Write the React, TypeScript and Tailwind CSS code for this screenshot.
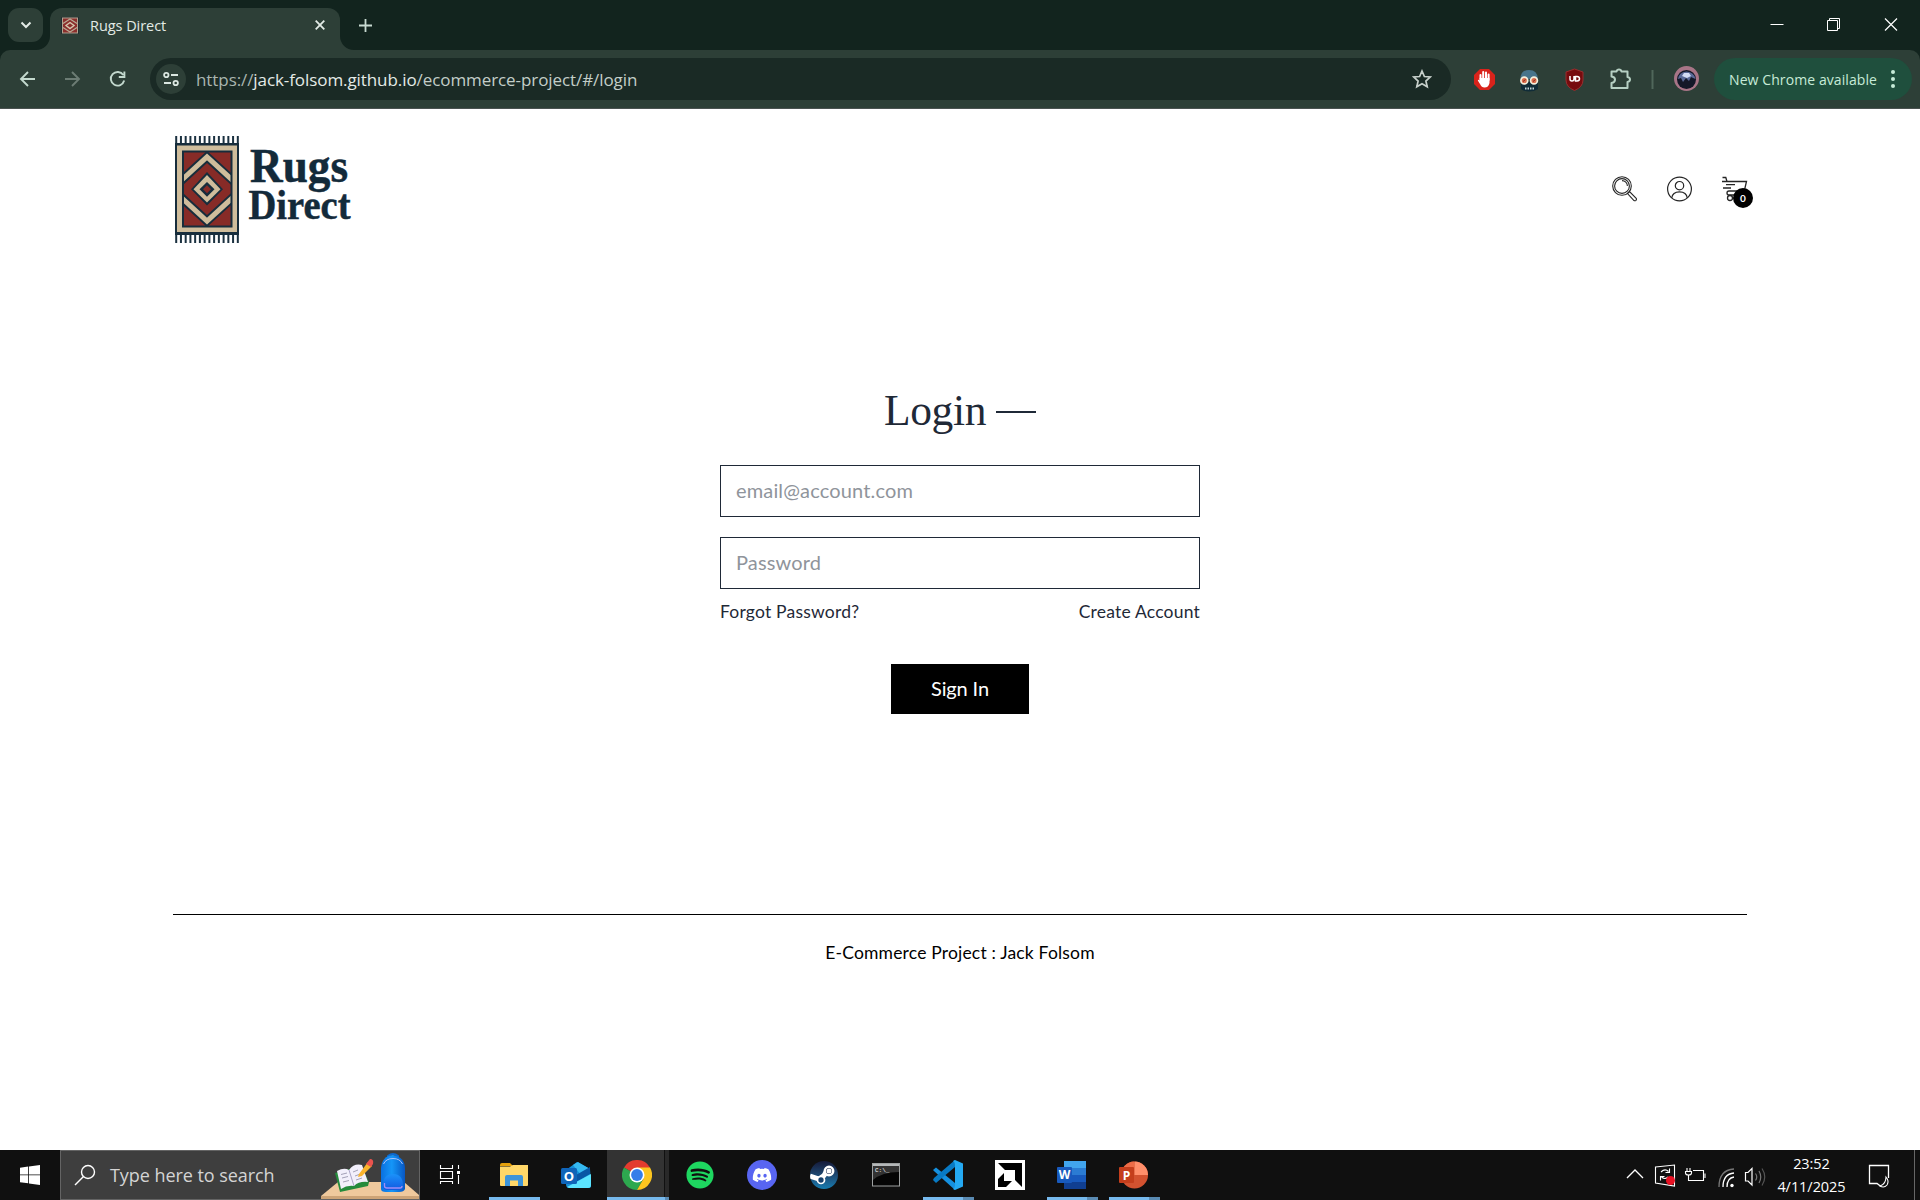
import React from "react";
import { FaSpotify, FaDiscord } from "react-icons/fa6";

const UI = "font-['Open_Sans','Noto_Sans',sans-serif]";

function RugArt() {
  const fringe = Array.from({ length: 14 }, (_, i) => 1.2 + i * 4.74);
  return (
    <svg width="64" height="107" viewBox="0 0 64 107" className="shrink-0">
      {fringe.map((x) => (
        <path key={x} d={`M${x} 0V8M${x} 98V107`} stroke="#1b3140" strokeWidth="2" />
      ))}
      <rect x="0" y="7" width="64" height="92" fill="#172d3c" />
      <rect x="2" y="9.5" width="60" height="86.5" fill="#cfbd9c" />
      <rect x="9" y="16" width="47" height="74" fill="#872b27" />
      <svg x="8" y="15" width="49" height="76" viewBox="8 15 49 76">
        <path d="M2 48.3L32 21L62 48.300M2 57.700L32 85L62 57.700" fill="none" stroke="#172d3c" strokeWidth="9" />
        <path d="M2 48.300L32 21L62 48.300M2 57.700L32 85L62 57.700" fill="none" stroke="#cfbd9c" strokeWidth="5" />
        <path d="M32 36L48 53.300L32 69.500L16 53.300Z" fill="#172d3c" />
        <path d="M32 39L45.500 53.300L32 66.500L18.500 53.300Z" fill="#cfbd9c" />
        <path d="M32 46L39.500 53.300L32 60.700L24.500 53.300Z" fill="#172d3c" />
        <path d="M32 49.300L36 53.300L32 57.300L28 53.300Z" fill="#872b27" />
      </svg>
      <rect x="8" y="15.500" width="48.500" height="75" fill="none" stroke="#172d3c" strokeWidth="2" />
    </svg>
  );
}

function Titlebar() {
  return (
    <div className="flex h-[50px] shrink-0 bg-[#12241e]">
      <div className="mt-2 ml-2 flex h-[34px] w-[35px] items-center justify-center rounded-[11px] bg-[#2d3f37]">
        <svg width="12" height="12" viewBox="0 0 12 12" fill="none" stroke="#e3ebe6" strokeWidth="2">
          <path d="M1.500 3.500L6 8L10.500 3.500" />
        </svg>
      </div>
      <div className="relative mt-2 ml-[7px] flex h-[42px] w-[290px] items-center rounded-t-[12px] bg-[#2d3f37] pb-[8px]">
        <svg width="14" height="14" className="absolute bottom-0 -left-[14px]"><path d="M14 0V14H0A14 14 0 0 0 14 0" fill="#2d3f37" /></svg>
        <svg width="14" height="14" className="absolute -right-[14px] bottom-0"><path d="M0 0V14H14A14 14 0 0 1 0 0" fill="#2d3f37" /></svg>
        <svg width="18" height="17" viewBox="0 0 18 17" className="ml-[11px]">
          <rect width="18" height="17" fill="#222c31" />
          <rect x="1.500" y="1" width="15" height="15" fill="#8c2f2d" stroke="#b2a48f" />
          <path d="M2 6.500L9 2L16 6.500M2 10.500L9 15L16 10.500" fill="none" stroke="#b9ac96" strokeWidth="1.200" />
          <path d="M9 5.500L13 8.500L9 11.500L5 8.500Z" fill="#8c2f2d" stroke="#d5c8ae" strokeWidth="1.400" />
        </svg>
        <span className={`${UI} mt-[2px] ml-[11px] text-[14.500px] tracking-[-0.050px] text-[#e3ebe6]`}>Rugs Direct</span>
        <svg width="10" height="10" viewBox="0 0 10 10" stroke="#e3ebe6" strokeWidth="1.800" className="mr-[15px] ml-auto">
          <path d="M.7.7L9.300 9.300M9.300.7L.7 9.300" />
        </svg>
      </div>
      <svg width="13" height="13" viewBox="0 0 13 13" stroke="#c8dad1" strokeWidth="1.800" className="mt-[19px] ml-[19px]">
        <path d="M6.500 0V13M0 6.500H13" />
      </svg>
      <div className="ml-auto flex h-[50px] items-center text-white">
        <svg width="57" height="50" stroke="currentColor"><path d="M21.500 24.500H34.500" /></svg>
        <svg width="57" height="50" fill="none" stroke="currentColor"><path d="M21.500 20.500H31.500V30.500H21.500ZM23.500 20.500V18.500H33.500V28.500H31.500" /></svg>
        <svg width="57" height="50" fill="none" stroke="currentColor" strokeWidth="1.200"><path d="M22 18.500L34 30.500M34 18.500L22 30.500" /></svg>
      </div>
    </div>
  );
}

function Toolbar() {
  return (
    <div className="flex h-[59px] shrink-0 bg-[#12241e]">
      <div className="flex h-[59px] w-full items-center rounded-t-[10px] border-b border-[#4a5250] bg-[#2d3f37]">
        <svg width="150" height="58" viewBox="0 50 150 58" fill="none" strokeWidth="1.900" className="shrink-0">
          <path d="M35 79H21M28 72L21 79L28 86" stroke="#c3d9ce" />
          <path d="M65 79H79M72 72L79 79L72 86" stroke="#6c7c74" />
          <path d="M123.300 75A6.800 6.800 0 1 0 124.200 80.500M124.400 71.500V77H118.800" stroke="#c3d9ce" />
        </svg>
        <div className="flex h-[42px] w-[1301px] items-center rounded-full bg-[#1a2a25]">
          <div className="ml-[6px] flex h-[30px] w-[30px] items-center justify-center rounded-full bg-[#2d3f37]">
            <svg width="16" height="16" viewBox="0 0 16 16" fill="none" stroke="#dbe7e1" strokeWidth="1.800">
              <circle cx="3.300" cy="4" r="2.200" /><path d="M8 4H15M1 12H8" /><circle cx="12.700" cy="12" r="2.200" />
            </svg>
          </div>
          <div className={`${UI} mt-[1px] ml-[10px] text-[17px] tracking-[-0.080px] whitespace-nowrap text-[#a9b5af]`}>
            https://<span className="text-[#e4ebe7]">jack-folsom.github.io</span><span className="text-[#c3cec8]">/ecommerce-project/#/login</span>
          </div>
          <svg width="20" height="20" viewBox="0 0 20 20" fill="none" stroke="#c7d0cb" strokeWidth="1.700" className="mr-[19px] ml-auto">
            <path d="M10 2L12.400 7.500L18.300 8L13.900 12L15.200 17.700L10 14.700L4.800 17.700L6.100 12L1.700 8L7.600 7.500Z" />
          </svg>
        </div>
        <svg width="263" height="58" viewBox="1451 50 263 58" className="shrink-0">
          <path d="M1480 69H1489L1495 75V84L1489 90H1480L1474 84V75Z" fill="#d9231b" />
          <path d="M1480.500 80.500V75M1483.200 79V72M1486 79V72.500M1488.600 80V74.500" stroke="#fff" strokeWidth="2" strokeLinecap="round" />
          <path d="M1479.500 78H1489.500V83Q1488.500 87.500 1484.500 87.500Q1481.500 87.500 1480 84L1477.800 80.500Q1478.500 79 1480 81Z" fill="#fff" />
          <path d="M1520.500 79Q1520.500 70 1529 70Q1537.500 70 1538 79Z" fill="#47748b" />
          <path d="M1521 82H1538V89Q1534 91.500 1529 91.500Q1524 91.500 1521 89Z" fill="#102c38" />
          <path d="M1525 88.500H1534" stroke="#c0d3d5" strokeWidth="2" strokeDasharray="1.500 1" />
          <circle cx="1524.300" cy="80.500" r="3.400" fill="#dd6d4c" stroke="#f3eeda" strokeWidth="1.700" />
          <circle cx="1534" cy="80.500" r="3.400" fill="#dd6d4c" stroke="#f3eeda" strokeWidth="1.700" />
          <path d="M1523 81.500L1525.500 79.500M1533 81.500L1535.500 79.500" stroke="#7c2c20" />
          <path d="M1574.500 69L1583 72V80Q1583 87 1574.500 90.500Q1566 87 1566 80V72Z" fill="#760b0e" stroke="#992e2e" />
          <path d="M1570 76V79Q1570 81 1572 81Q1574 81 1574 79V76M1575.500 81V76.500H1577Q1579.500 76.500 1579.500 78.800Q1579.500 81 1577 81Z" fill="none" stroke="#fff" strokeWidth="1.500" />
          <path d="M1611.500 71.500H1616.500Q1617 69.500 1619 69.500Q1621 69.500 1621.500 71.500H1627.500V77Q1630 77.500 1630 79.500Q1630 81.500 1627.500 82V88H1611.500V83Q1615 82.500 1615 79.500Q1615 77 1611.500 76.500Z" fill="none" stroke="#b6d0c3" strokeWidth="2" strokeLinejoin="round" />
          <path d="M1652.500 70V89" stroke="#50675b" strokeWidth="2" />
          <circle cx="1686.500" cy="78.500" r="12.500" fill="#a87587" />
          <circle cx="1686.500" cy="79.500" r="9.500" fill="#141828" />
          <path d="M1678 79Q1679 72 1686.500 71.500Q1694 72 1695.500 79L1691 77L1689 81L1686 78L1683 82L1681 78Z" fill="#5a6a98" />
          <path d="M1682 76L1684 73L1689 73L1691 76L1687 78Z" fill="#d3dcf4" />
        </svg>
        <div className={`${UI} flex h-[42px] w-[198px] shrink-0 items-center rounded-full bg-[#1f4f3d] pl-[15px] text-[14px] tracking-[0.090px] whitespace-nowrap text-[#c7ebd8]`}>
          New Chrome available
          <svg width="4" height="20" viewBox="0 0 4 20" fill="#c7ebd8" className="mr-[17px] ml-auto">
            <circle cx="2" cy="3" r="2" /><circle cx="2" cy="10" r="2" /><circle cx="2" cy="17" r="2" />
          </svg>
        </div>
      </div>
    </div>
  );
}

function Shop() {
  return (
    <main className="flex h-[1041px] shrink-0 flex-col bg-white px-[173px] font-[Lato,sans-serif] text-[#1f2937]">
      <header className="flex h-[160px] items-center justify-between">
        <div className="flex items-start pl-[2px]">
          <RugArt />
          <svg width="124" height="107" fill="#132a3a" stroke="#132a3a" strokeWidth=".5" className="overflow-visible font-['Liberation_Serif',serif] font-bold">
            <text x="11" y="45.500" fontSize="48" textLength="98" lengthAdjust="spacingAndGlyphs">Rugs</text>
            <text x="9.500" y="83" fontSize="43" textLength="102" lengthAdjust="spacingAndGlyphs">Direct</text>
          </svg>
        </div>
        <div className="flex items-center gap-[30px]">
          <svg width="25" height="26" viewBox="0 0 25 26" fill="none" stroke="#252525" strokeWidth="1.100">
            <circle cx="10" cy="10" r="9.300" /><circle cx="10" cy="10" r="7.400" />
            <path d="M10 4.600A5.400 5.400 0 0 1 15.400 10" />
            <path d="M15.500 17.500L17.500 15.500L24.200 22.300Q24.800 23.500 24 24.300Q23 25.200 22 24.500Z" />
          </svg>
          <svg width="25" height="26" viewBox="0 0 25 26" fill="none" stroke="#252525" strokeWidth="1.200">
            <circle cx="12.500" cy="13" r="11.900" /><circle cx="12.500" cy="9.700" r="4.200" />
            <path d="M4.700 22Q5.500 15.800 12.500 15.800Q19.500 15.800 20.300 22" />
          </svg>
          <div className="relative h-[26px] w-[25px]">
            <svg width="26" height="26" viewBox="0 0 26 26" fill="none" stroke="#252525" strokeWidth="1.300">
              <path d="M.5 1.500H3.800L5 5.500H24.500L22.500 14M0 5.500H5M4 8.700H13M1 12H9M20 15H7Q5 15 5 17Q5 19 7 19H20" />
              <circle cx="8" cy="22" r="2.500" />
            </svg>
            <span className="absolute top-[12px] left-[11px] flex h-5 w-5 items-center justify-center rounded-full bg-black text-[10px] leading-none font-bold text-white">0</span>
          </div>
        </div>
      </header>
      <form className="mx-auto mt-[111px] flex w-[480px] flex-col">
        <div className="flex h-[60px] items-center justify-center gap-[10px]">
          <h1 className="font-['Liberation_Serif',serif] text-[43.500px] leading-[60px] tracking-[-0.350px]">Login</h1>
          <span className="mt-[4px] h-[2px] w-10 bg-[#1f2937]" />
        </div>
        <input placeholder="email@account.com" className="mt-[25px] h-[52px] border border-[#1f2937] px-[15px] pb-[2px] text-[20px] tracking-[0.150px] placeholder:text-[#8f949b]" />
        <input placeholder="Password" className="mt-5 h-[52px] border border-[#1f2937] px-[15px] pb-[2px] text-[20px] tracking-[0.150px] placeholder:text-[#8f949b]" />
        <div className="mt-[10px] flex justify-between text-[17.500px] leading-[26px] tracking-[0.200px]">
          <span>Forgot Password?</span>
          <span>Create Account</span>
        </div>
        <button type="button" className="mx-auto mt-[39px] h-[50px] w-[138px] bg-black pb-[2px] text-[20px] tracking-[-0.150px] text-white">Sign In</button>
      </form>
      <footer className="mt-[200px] border-t border-black pt-[25px] text-center text-[17.500px] leading-[26px] tracking-[0.180px] text-black">E-Commerce Project : Jack Folsom</footer>
    </main>
  );
}

function TaskItem({ children, bar }: { children: React.ReactNode; bar?: "one" | "many" }) {
  return (
    <div className="relative flex h-[50px] w-[62px] items-center justify-center">
      {children}
      {bar === "one" && <span className="absolute bottom-0 left-[6px] h-[3px] w-[51px] bg-[#76b9ed]" />}
      {bar === "many" && <span className="absolute bottom-0 left-[6px] h-[3px] w-[51px] border-r-[11px] border-[#5a8bb3] bg-[#76b9ed]" />}
    </div>
  );
}

function SearchArt() {
  return (
    <svg width="98" height="48" viewBox="322 1151 98 48" className="ml-auto shrink-0">
      <defs>
        <linearGradient id="pack" x2="1"><stop stopColor="#0a70e0" /><stop offset=".45" stopColor="#1596f8" /><stop offset="1" stopColor="#0757c4" /></linearGradient>
        <linearGradient id="pocket" y2="1" x2="0"><stop stopColor="#1b92fa" /><stop offset="1" stopColor="#1159e0" /></linearGradient>
      </defs>
      <path d="M339 1182H405L420 1195V1199H322V1196Z" fill="#efc99d" />
      <path d="M322 1196H420V1199H322Z" fill="#cda477" />
      <path d="M336 1173L341 1192L369 1186L370 1182L362 1166Z" fill="#258b3c" />
      <path d="M338 1171Q345 1167 350 1170Q355 1163 363 1165L369 1182Q360 1181 355 1186Q348 1185 342 1189Z" fill="#f2effb" />
      <path d="M350 1170L355 1186" stroke="#aaa4c6" />
      <path d="M342 1174.500L348 1173M343 1178L349 1176.500M344 1182L350 1180.500M354 1172L359 1170M356 1176L360 1174.500M357 1180L363 1178" stroke="#8f8da6" strokeWidth=".8" />
      <path d="M360 1174L369 1162L373 1166L363 1176L359 1177Z" fill="#f9b42c" />
      <path d="M367 1164L371 1159Q375 1159 374 1164L372 1167Z" fill="#e9534e" />
      <path d="M389 1158V1156Q394 1152 399 1156V1158" fill="none" stroke="#0c68cf" strokeWidth="2" />
      <path d="M382 1189V1168Q383 1156 394 1155Q406 1157 406 1169V1189Q405 1192 400 1192H387Q382 1192 382 1189Z" fill="url(#pack)" />
      <path d="M384.500 1164Q387 1158.500 394 1158.500Q401 1158.500 403.500 1164" fill="none" stroke="#a9c4ff" strokeWidth="1" />
      <path d="M384 1186Q384 1174 394 1174Q404 1174 404 1186Q404 1190 400 1190H388Q384 1190 384 1186Z" fill="url(#pocket)" />
      <path d="M385.500 1183V1186Q385.500 1188 388 1188H401Q403 1188 403 1186" fill="none" stroke="#a08ff5" strokeWidth="1.300" />
    </svg>
  );
}

function Taskbar() {
  return (
    <div className={`${UI} flex h-[50px] shrink-0 bg-[#101010] text-white`}>
      <div className="flex w-[60px] items-center justify-center">
        <svg width="20" height="20" viewBox="0 0 20 20" fill="#fff"><path d="M0 2.800L8.200 1.600V9.500H0ZM9 1.500L20 0V9.500H9ZM0 10.300H8.200V18.300L0 17.200ZM9 10.300H20V20L9 18.500Z" /></svg>
      </div>
      <div className="flex w-[360px] items-center border border-[#646464] bg-[#3e3e3e]">
        <svg width="22" height="22" viewBox="0 0 22 22" fill="none" stroke="#fff" strokeWidth="1.400" className="ml-[13px]"><circle cx="14" cy="8" r="6.500" /><path d="M9.500 12.500L1 21" /></svg>
        <span className="ml-[14px] text-[18px] tracking-[-0.060px] whitespace-nowrap text-[#d4d4d4]">Type here to search</span>
        <SearchArt />
      </div>
      <svg width="63" height="50" fill="none" stroke="#fff" strokeWidth="1.100">
        <path d="M20.500 15V18.500H32.500V15M20.500 34V31.500H32.500V34M20.500 21.500H32.500V28.500H20.500ZM38.500 15V19M38.500 25V34" /><path d="M37 21H40V24H37Z" fill="#fff" stroke="none" />
      </svg>
      <TaskItem bar="one">
        <svg width="28" height="24" viewBox="0 0 28 24"><path d="M0 2Q0 0 2 0H10L13 3H0Z" fill="#e5a00b" /><path d="M0 3.500H10L13 2H28V22Q28 23 27 23H1Q0 23 0 22Z" fill="#ffd768" /><path d="M5 23V14Q5 12 7 12H21Q23 12 23 14V23H18V17.500H10V23Z" fill="#3d94d9" /></svg>
      </TaskItem>
      <TaskItem>
        <svg width="30" height="27" viewBox="0 0 30 27"><path d="M5 8L16 0L29 7L30 24Q30 26 27 26H8Q5 26 5 22Z" fill="#148fd9" /><path d="M12 3L17 0L29 7L20 13Z" fill="#35b9f1" /><path d="M15 13L29 5V12L15 20Z" fill="#0856a5" /><path d="M6 25L30 12V23Q30 26 27 26H8Z" fill="#5be4ff" /><rect y="6" width="16" height="16" rx="1.500" fill="#0f64b8" /><text x="8" y="18.500" textAnchor="middle" fill="#fff" fontSize="13" fontWeight="700">O</text></svg>
      </TaskItem>
      <div className="relative flex w-[62px] items-center bg-[#333] pl-[15px]">
        <span className="absolute top-0 right-0 h-[50px] w-[5px] border-l border-[#111] bg-[#292929]" />
        <svg width="30" height="30" viewBox="0 0 30 30" className="relative"><path d="M15 15L2 7.500A15 15 0 0 1 28 7.500Z" fill="#e33b2e" /><path d="M15 15L2 7.500A15 15 0 0 0 15 30L21.500 18.700Z" fill="#2da84f" /><path d="M15 7.500H28A15 15 0 0 1 15 30L21.500 18.700Z" fill="#fcc51f" /><circle cx="15" cy="15" r="7.500" fill="#fff" /><circle cx="15" cy="15" r="5.900" fill="#347ee9" /></svg>
        <span className="absolute bottom-0 left-0 h-[3px] w-[62px] border-r-[4px] border-[#5a8bb3] bg-[#76b9ed]" />
      </div>
      <TaskItem><FaSpotify size={28} color="#1ed760" /></TaskItem>
      <TaskItem><span className="flex h-[30px] w-[30px] items-center justify-center rounded-full bg-[#5865f2]"><FaDiscord size={20} color="#fff" /></span></TaskItem>
      <TaskItem><span className="flex h-[28px] w-[28px] items-center justify-center overflow-hidden rounded-full bg-linear-to-b from-[#141a39] to-[#147cb0]"><svg width="28" height="28" viewBox="0 0 28 28"><path d="M0 15L9 18L14 14.500L16 11" fill="none" stroke="#fff" strokeWidth="5" /><circle cx="19" cy="10" r="4.200" fill="#17294c" stroke="#fff" strokeWidth="2.500" /><circle cx="19" cy="10" r="2.500" fill="#fff" /><circle cx="11" cy="19" r="3.500" fill="#17416c" stroke="#fff" strokeWidth="1.700" /></svg></span></TaskItem>
      <TaskItem><svg width="28" height="24" viewBox="0 0 28 24"><rect x=".5" y=".5" width="27" height="22.500" fill="#050505" stroke="#9da0a0" /><path d="M1 1H27V3H1Z" fill="#b5b8b9" /><path d="M1 3H27V9Q10 9 1 17Z" fill="#333" /><text x="3" y="9" fill="#fff" fontSize="6" fontFamily="Liberation Mono">C:\_</text></svg></TaskItem>
      <TaskItem bar="many"><svg width="30" height="30" viewBox="0 0 30 30"><path d="M0 10L3 7.500L22 23V30L1.500 11.500Z" fill="#1590df" /><path d="M0 20L3 23L22 7V0L1 18Z" fill="#087ac4" /><path d="M22 0L30 3.500V26.500L22 30L20 29Q22 28 22 25V5Q22 2 20 1Z" fill="#24a9f2" /></svg></TaskItem>
      <TaskItem><svg width="30" height="30" viewBox="0 0 30 30"><rect width="30" height="30" fill="#fff" /><path d="M3 3H27V27L20 20V10H10Z" fill="#000" /><path d="M9 13V21H17L11 27H3V19Z" fill="#000" /></svg></TaskItem>
      <TaskItem bar="many"><svg width="30" height="28" viewBox="0 0 30 28"><path d="M7 0H29V7H7Z" fill="#41a5ee" /><path d="M7 7H29V14H7Z" fill="#2b7cd3" /><path d="M7 14H29V21H7Z" fill="#185abd" /><path d="M7 21H29V28H7Z" fill="#103f91" /><rect y="6" width="15" height="16" rx="1" fill="#185abd" /><text x="7.500" y="18.300" textAnchor="middle" fill="#fff" fontSize="12" fontWeight="700">W</text></svg></TaskItem>
      <TaskItem bar="many"><svg width="30" height="28" viewBox="0 0 30 28"><circle cx="15.500" cy="14" r="13.500" fill="#d35230" /><path d="M15 .5A13.500 13.500 0 0 0 2 14H15Z" fill="#ed6c47" /><path d="M15.500 .5A13.500 13.500 0 0 1 29 14H15.500Z" fill="#ff8f6b" /><rect y="6" width="15" height="16" rx="1" fill="#c43e1c" /><text x="7.500" y="18.500" textAnchor="middle" fill="#fff" fontSize="12" fontWeight="700">P</text></svg></TaskItem>
      <svg width="156" height="50" viewBox="1615 1150 156 50" fill="none" stroke="#fff" strokeWidth="1.300" className="ml-auto shrink-0">
        <path d="M1627 1178L1635 1170L1643 1178" />
        <path d="M1655.500 1167L1674.500 1165V1186L1655.500 1183Z" strokeWidth="1.100" />
        <path d="M1661 1172Q1665 1168 1668.500 1171.500M1669.500 1168.500V1172.500H1665.500M1668 1177Q1665 1180 1661.500 1177M1660.500 1180.500V1176.500H1664.500" strokeWidth="1.100" />
        <circle cx="1670.500" cy="1180.500" r="4.500" fill="#e81123" stroke="none" />
        <path d="M1693 1170.500H1703.500V1180.500H1691M1705 1173.500V1178M1687 1168V1171M1690 1168V1171M1685.500 1171.500H1691.500V1173Q1691.500 1175 1688.500 1175Q1685.500 1175 1685.500 1173ZM1688.500 1175V1180.500H1691" strokeWidth="1.100" />
        <path d="M1719 1187Q1719 1170 1734 1169" stroke="#777" /><path d="M1723 1187Q1723 1174 1734 1173M1727 1187Q1727 1178 1734 1177" /><circle cx="1732" cy="1185.500" r="1.700" fill="#fff" stroke="none" />
        <path d="M1745.500 1172.500H1748L1752 1168.500V1185L1748 1181H1745.500Z" strokeWidth="1.200" /><path d="M1755.500 1173.500Q1758 1177 1755.500 1180.500M1759 1171Q1762.500 1177 1759 1183" stroke="#777" strokeWidth="1.200" /><path d="M1762 1168.500Q1767.500 1177 1762 1185.500" stroke="#555" strokeWidth="1.200" />
      </svg>
      <div className="flex w-[81px] flex-col items-center pt-[2px] text-[14.500px] leading-[23px] tracking-[-0.050px]"><span>23:52</span><span>4/11/2025</span></div>
      <svg width="68" height="50" viewBox="1852 1150 68 50" fill="none" stroke="#fff" strokeWidth="1.300">
        <path d="M1881 1186.500L1877 1183.500H1869.500V1165.500H1888.500V1178" /><path d="M1886 1177Q1889.500 1181 1887 1185Q1884 1188.500 1880 1186Q1886 1184 1886 1177Z" strokeWidth="1.100" /><path d="M1914.500 1150V1200" stroke="#666" strokeWidth="1" />
      </svg>
    </div>
  );
}

export default function App() {
  return (
    <div className="flex h-[1200px] w-[1920px] flex-col overflow-hidden">
      <Titlebar />
      <Toolbar />
      <Shop />
      <Taskbar />
    </div>
  );
}
